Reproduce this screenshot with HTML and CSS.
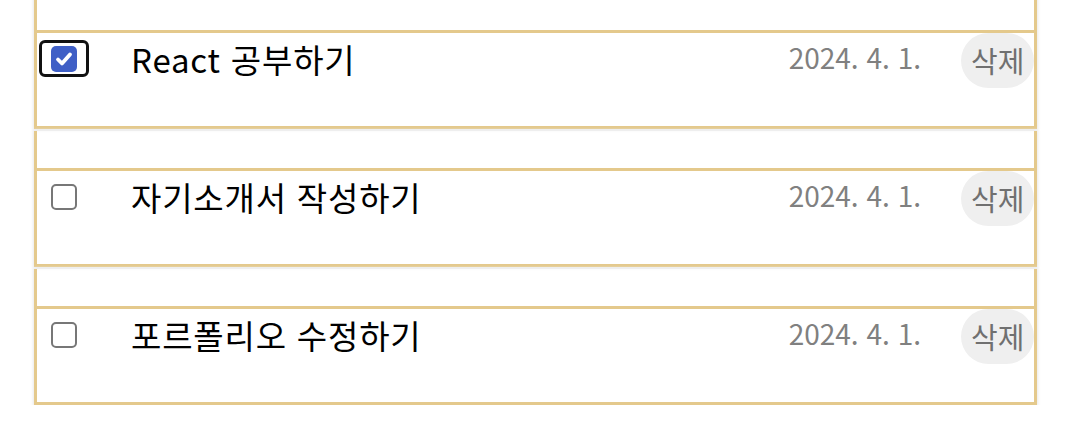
FILE: index.html
```html
<!DOCTYPE html>
<html lang="ko">
<head>
<meta charset="utf-8">
<title>Todo</title>
<link rel="stylesheet" href="styles.css">
</head>
<body>
<ul class="list">
  <li class="item">
    <div class="row">
      <label class="check focused">
        <span class="box checked">
          <svg viewBox="0 0 26 26" width="26" height="26"><path d="M7 13.5 L11 17.5 L19 8.5" fill="none" stroke="#fff" stroke-width="3.8" stroke-linecap="round" stroke-linejoin="round"/></svg>
        </span>
      </label>
      <span class="text">React 공부하기</span>
      <span class="date">2024. 4. 1.</span>
      <button class="del">삭제</button>
    </div>
  </li>
  <li class="item">
    <div class="row">
      <label class="check"><span class="box"></span></label>
      <span class="text">자기소개서 작성하기</span>
      <span class="date">2024. 4. 1.</span>
      <button class="del">삭제</button>
    </div>
  </li>
  <li class="item">
    <div class="row">
      <label class="check"><span class="box"></span></label>
      <span class="text">포르폴리오 수정하기</span>
      <span class="date">2024. 4. 1.</span>
      <button class="del">삭제</button>
    </div>
  </li>
</ul>
</body>
</html>
```
FILE: styles.css
```css
html, body {
  margin: 0;
  padding: 0;
  background: #fff;
  font-family: "Noto Sans CJK KR", "Noto Sans", sans-serif;
  overflow: hidden;
}

.list {
  list-style: none;
  margin: -7px 0 0 34px;
  padding: 0;
  width: 1003px;
  display: flex;
  flex-direction: column;
  gap: 2px;
}

.item {
  border: 3px solid #e4c98c;
  border-top: none;
  box-shadow: 0 0 3px 1px #e9e9e9;
  padding-top: 37px;
}

.row {
  border-top: 3px solid #e4c98c;
  height: 93px;
  display: flex;
  align-items: flex-start;
}

.check {
  width: 50px;
  height: 37px;
  margin: 7px 0 0 2px;
  box-sizing: border-box;
  display: flex;
  align-items: center;
  justify-content: center;
  border-radius: 6px;
  flex: none;
}

.check.focused {
  border: 3px solid #111;
  box-shadow: inset 0 0 0 1px #fff;
}

.box {
  width: 26px;
  height: 26px;
  box-sizing: border-box;
  border: 2px solid #777;
  border-radius: 5px;
  background: #fff;
  display: block;
}

.box.checked {
  border: none;
  background: #3f5fc6;
}

.box svg {
  display: block;
}

.text {
  flex: 1;
  margin: 2px 0 0 42px;
  font-size: 33px;
  letter-spacing: 0.8px;
  line-height: 48px;
  color: #000;
  white-space: nowrap;
}

.date {
  margin-top: 4px;
  font-size: 28px;
  line-height: 41px;
  color: #808080;
  white-space: nowrap;
}

.del {
  margin-left: 40px;
  width: 73px;
  height: 55px;
  padding: 0 0 0 10px;
  border: none;
  border-radius: 28px;
  background: #efefef;
  font-family: inherit;
  font-size: 29px;
  line-height: 41px;
  color: #707070;
  text-align: left;
  flex: none;
}
```
